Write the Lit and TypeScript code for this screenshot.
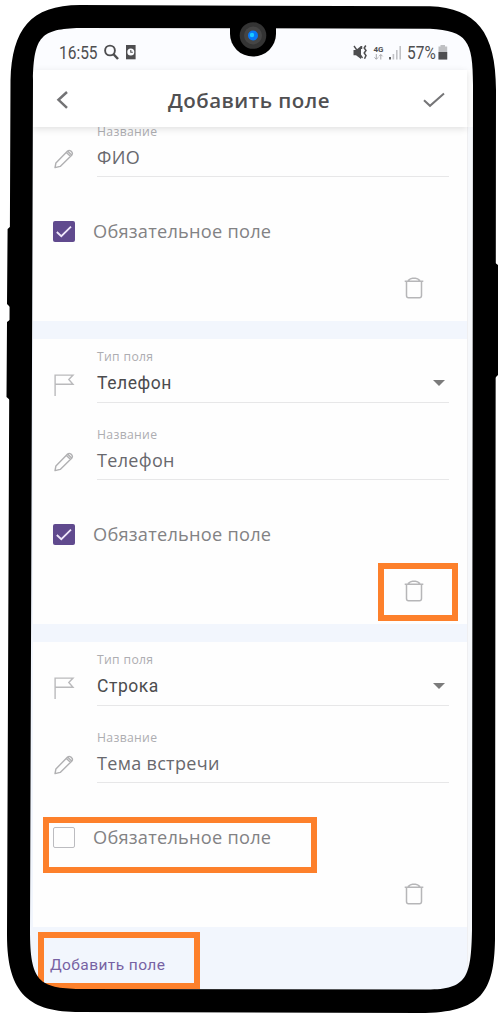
import { LitElement, html, svg, css, nothing } from "lit";
import { customElement, property } from "lit/decorators.js";

const pencil = html`<svg width="22" height="22" viewBox="0 0 22 22" fill="none" stroke="#b0b0b2" stroke-width="1.4" stroke-linejoin="round">
  <path d="M2 19.6 L2.9 15 L14.6 3 Q15.9 1.9 17.6 2.8 L19 4.2 Q20 5.6 18.9 7 L7.2 18.4 Z M13.4 4.4 L17.4 8.3 M14.8 3.2 L18.6 6.9"/></svg>`;
const flag = html`<svg width="22" height="24" viewBox="0 0 22 24" fill="none" stroke="#bababc" stroke-width="1.4">
  <path d="M2.1 23 V2.1 H20 L15.8 6.5 L20 11.3 H2.1"/></svg>`;
const trash = html`<svg width="20" height="22" viewBox="0 0 20 22" fill="none" stroke="#b6b6b8" stroke-width="1.5">
  <path d="M.7 4.2 H19.3 M4 3.6 Q6.500 1.3 8.500 1.3 H11.500 Q13.500 1.3 16 3.6 M2.5 4.5 V18.4 Q2.5 20.7 4.6 20.7 H15.4 Q17.5 20.7 17.5 18.4 V4.5"/></svg>`;

@customElement("field-card")
export class FieldCard extends LitElement {
  @property() type = "";
  @property() name = "";
  @property({ type: Boolean }) required = false;

  static styles = css`
    :host { display: block; flex: none; background: #fefefe; }
    .row { display: flex; height: 77px; box-sizing: border-box; }
    .row.type { height: 64px; }
    .row.first { height: 53px; }
    .icon { width: 64px; box-sizing: border-box; padding-left: 20px; display: flex; align-items: flex-end; flex: none; }
    .icon.pen { padding-bottom: 7px; }
    .icon.flag { padding-bottom: 6px; }
    .body { width: 352px; box-sizing: border-box; border-bottom: 1px solid #e7e7e8; display: flex; flex-direction: column; justify-content: flex-end; white-space: nowrap; }
    .label { font: 12.2px/16px "Open Sans", "Noto Sans", sans-serif; color: #adadb1; letter-spacing: .33px; }
    .value { display: flex; align-items: center; justify-content: space-between; font: 18px/24px "Open Sans", "Noto Sans", sans-serif; letter-spacing: .32px; color: #68686d; margin-top: 5px; padding-bottom: 7px; }
    .type .value { color: #4c4c4e; font-family: Roboto, sans-serif; font-size: 17.5px; letter-spacing: .55px; }
    .type .label { margin-bottom: 1px; }
    .arrow { width: 12px; height: 6px; margin-right: 4px; background: #7b7b7b; clip-path: polygon(0 0, 100% 0, 50% 100%); }
    .check { display: flex; align-items: center; gap: 18px; padding: 41px 0 0 20px; height: 26px; font: 18.2px/26px "Open Sans", "Noto Sans", sans-serif; letter-spacing: .25px; color: #828284; white-space: nowrap; }
    .box { width: 22px; height: 21px; box-sizing: border-box; border: 1.5px solid #bcbcc0; border-radius: 2px; display: block; }
    .box.on { background: #604a8e; border: 0; }
    .actions { display: flex; justify-content: flex-end; padding: 33px 43px 22px 0; height: 22px; }
  `;

  render() {
    return html`
      ${this.type ? html`<div class="row type"><div class="icon flag">${flag}</div>
        <div class="body"><div class="label">Тип поля</div>
        <div class="value"><span>${this.type}</span><i class="arrow"></i></div></div></div>` : nothing}
      <div class=${this.type ? "row" : "row first"}><div class="icon pen">${pencil}</div>
        <div class="body"><div class="label">Название</div><div class="value"><span>${this.name}</span></div></div></div>
      <div class="check">
        ${this.required
          ? html`<svg class="box on" viewBox="0 0 22 21" fill="none" stroke="#eee6fa" stroke-width="1.8"><path d="M3.8 11 L8.3 15.2 L18 5.7"/></svg>`
          : html`<span class="box"></span>`}
        <span>Обязательное поле</span>
      </div>
      <div class="actions">${trash}</div>`;
  }
}

@customElement("app-root")
export class AppRoot extends LitElement {
  static styles = css`
    :host { display: block; position: relative; width: 500px; height: 1016px; overflow: hidden; background: #fff; }
    .screen { position: relative; box-sizing: border-box; height: 1016px; padding: 28px 27px 26px 33px; display: flex; flex-direction: column; background: #fff; }
    .status { height: 42px; flex: none; background: #fbfcff; display: flex; align-items: center; padding: 8px 25px 0 26px; box-sizing: border-box; color: #4e4e50; font: 18px/20px Roboto, sans-serif; }
    .narrow { display: inline-block; transform: scaleX(.86); transform-origin: 0 50%; white-space: nowrap; }
    .time { width: 45px; }
    .battery { width: 31px; }
    .spacer { flex: 1; }
    .sicons { display: block; }
    .header { height: 57px; flex: none; width: 434px; display: flex; align-items: center; box-sizing: border-box; padding: 2px 22px 0 23px; background: #fff; box-shadow: 0 2px 7px rgba(0,0,0,.12); position: relative; z-index: 1; }
    .title { flex: 1; text-align: center; font: 600 20.5px/28px "Open Sans", "Noto Sans", sans-serif; letter-spacing: .48px; color: #505052; white-space: nowrap; padding-left: 7px; }
    .scroll { flex: 1; min-height: 0; display: flex; border-right: 5px solid #f6f8fb; background: #efeff1; margin-left: -4px; }
    .list { flex: none; min-height: 0; width: 434px; padding-left: 4px; display: flex; flex-direction: column; justify-content: flex-end; gap: 18px; background: #f2f6fd; }
    .footer { height: 63px; flex: none; margin-top: -18px; box-sizing: border-box; padding: 26px 0 0 17px; font: 15.5px/25px Roboto, sans-serif; letter-spacing: .42px; color: #7762a3; }
    .mark { position: absolute; box-sizing: border-box; border: 6px solid #fd802b; z-index: 2; }
    .m1 { left: 378px; top: 563px; width: 80px; height: 58px; }
    .m2 { left: 43px; top: 817px; width: 274px; height: 56px; }
    .m3 { left: 38px; top: 932px; width: 162px; height: 57px; }
    .frame { position: absolute; left: 0; top: 0; z-index: 3; }
  `;

  render() {
    return html`
      <div class="screen">
        <div class="status">
          <span class="narrow time">16:55</span>
          <svg class="sicons" width="34" height="20" viewBox="104 43 34 20" fill="none">
            <circle cx="110" cy="50.500" r="4.9" stroke="#4e4e50" stroke-width="1.9"/><path d="M113.3 54 L118 59" stroke="#4e4e50" stroke-width="2.5"/>
            <rect x="126" y="45" width="9.6" height="14.3" fill="#4e4e50"/><circle cx="130.8" cy="52" r="3.5" fill="#fbfcff"/><path d="M130.8 49.900 V52.3 H132.8" stroke="#4e4e50" stroke-width="1.1"/>
          </svg>
          <span class="spacer"></span>
          <svg class="sicons" width="54" height="20" viewBox="353 43 54 20" fill="none">
            <path d="M353.5 50 H356 L361 46 V59 L356 55.3 H353.5 Z" fill="#4e4e50"/><path d="M354 46 L362.500 58" stroke="#4e4e50" stroke-width="1.4"/>
            <path d="M361.500 46 V49 M365.800 45.5 L364.2 48 L366 50.500 L364.2 53 L366 55.500 L364.500 58.8" stroke="#4e4e50" stroke-width="1.5"/>
            <text x="373.5" y="51.6" font-family="Roboto, sans-serif" font-size="8" font-weight="700" fill="#4e4e50">4G</text>
            <path d="M376.3 54 V59 M374.5 57.4 L376.3 59.3 L378.1 57.4 M380.8 59.5 V54.7 M379 56.3 L380.8 54.5 L382.6 56.3" stroke="#a8a8ac" stroke-width="1"/>
            <path d="M390 59.5 V57" stroke="#4e4e50" stroke-width="1.8"/><path d="M393.4 59.5 V54 M396.8 59.5 V50 M400.2 59.5 V46" stroke="#c1c2c6" stroke-width="1.6"/>
          </svg>
          <span class="narrow battery">57%</span>
          <svg class="sicons" width="10" height="20" viewBox="438 43 10 20"><path d="M440.5 45 H445 V46.5 H447.2 V59.5 H438.5 V46.5 H440.5 Z" fill="#bfc0c3"/><path d="M438.5 52 H447.2 V59.5 H438.5 Z" fill="#4e4e50"/></svg>
        </div>
        <div class="header">
          <svg width="12" height="18" viewBox="0 0 12 18" fill="none" stroke="#737375" stroke-width="2.5"><path d="M11 1 L2.500 8.8 L11 16.8"/></svg>
          <div class="title">Добавить поле</div>
          <svg width="22" height="16" viewBox="0 0 22 16" fill="none" stroke="#757577" stroke-width="2"><path d="M1 8.2 L7 13.8 L21 1.5"/></svg>
        </div>
        <div class="scroll">
          <div class="list">
            <field-card name="ФИО" required></field-card>
            <field-card type="Телефон" name="Телефон" required></field-card>
            <field-card type="Строка" name="Тема встречи"></field-card>
            <div class="footer">Добавить поле</div>
          </div>
        </div>
      </div>
      <div class="mark m1"></div><div class="mark m2"></div><div class="mark m3"></div>
      <svg class="frame" width="500" height="1016" viewBox="0 0 500 1016">
        <path fill="#fff" fill-rule="evenodd" d="M0 0H500V1016H0Z M12 80V950Q14 1005 60 1008H440Q490 1005 490 950V80Q490 12 430 10H80Q15 12 12 80Z"/>
        <path fill-rule="evenodd" d="M10.500 80 C12 30 30 5 80 5 L430 6.300 C476 8 496 32 496 90 L495 940 C494 991 482 1013 420 1013 L80 1012 C30 1012 7 995 7 935 Z
          M33 80 C34 36 41 29 80 28 L430 28.700 C467 31 473 40 473 85 L472 930 C471 978 467 990 425 989.500 L80 989 C39 988 30 982 30 930 Z"/>
        <path d="M11 226 L7.600 229 L7 304 L11 308 Z M11 319 L7 322 L6.500 397 L11 401 Z M494 262 L498 265 V375 L494 379 Z"/>
        ${svg`<path d="M230 26 V34 A23 22.500 0 0 0 276 34 V26 Z"/>
        <circle cx="253" cy="35.500" r="13.300" fill="#343434"/><circle cx="253" cy="35.500" r="9" fill="#454545"/><circle cx="253" cy="35.500" r="5" fill="#0878f5"/><circle cx="252" cy="35" r="2.200" fill="#1ccaff"/>`}
      </svg>`;
  }
}
